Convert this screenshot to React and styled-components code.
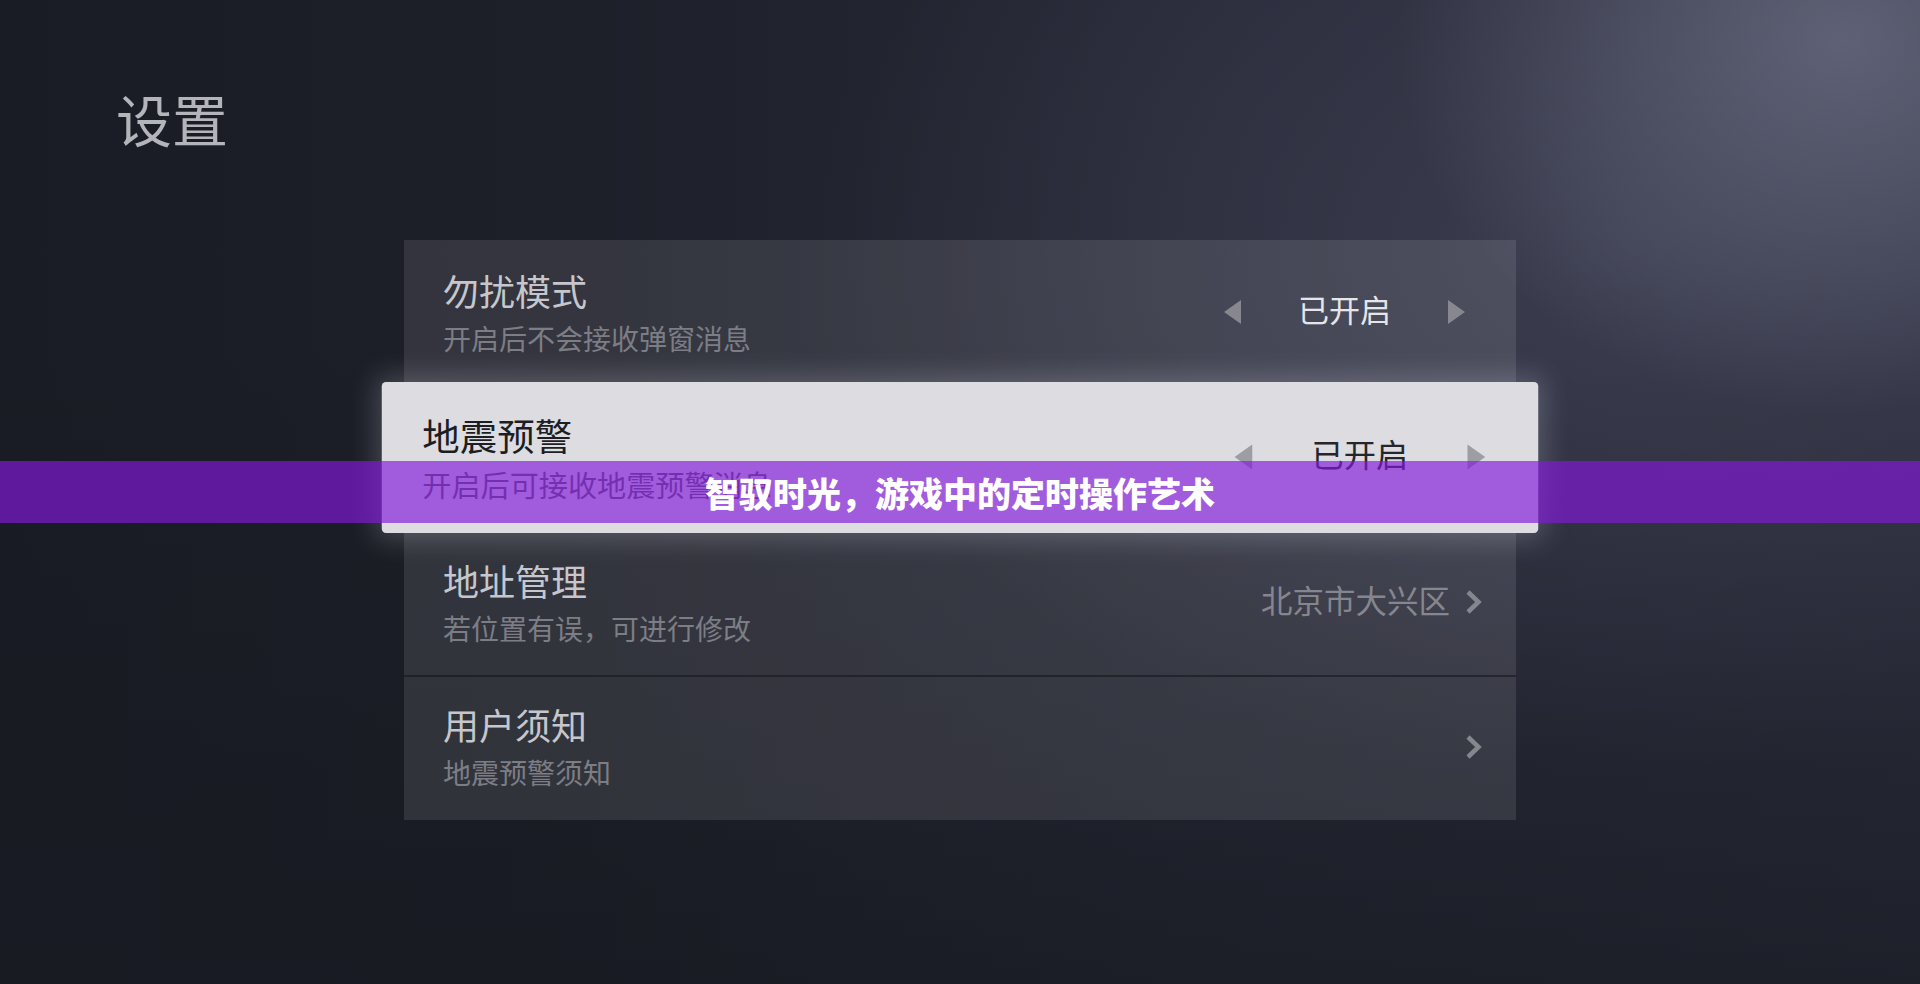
import React from "react";
import styled, { createGlobalStyle, css } from "styled-components";

const GlobalStyle = createGlobalStyle`
  html, body { margin: 0; padding: 0; }
  body {
    font-family: "Noto Sans CJK SC", "Noto Sans", sans-serif;
    background: #191b24;
  }
`;

const Page = styled.div`
  position: relative;
  height: 984px;
  overflow: hidden;
  background:
    radial-gradient(ellipse 620px 520px at 96% 4%, rgba(120, 122, 145, 0.62), rgba(120, 122, 145, 0) 72%),
    radial-gradient(ellipse 1100px 700px at 85% 25%, rgba(80, 82, 105, 0.45), rgba(80, 82, 105, 0) 75%),
    linear-gradient(to bottom, rgba(24, 26, 34, 0) 35%, rgba(24, 26, 34, 0.75) 100%),
    linear-gradient(90deg, #1a1c25 0%, #1d1f29 30%, #272937 62%, #2e3040 100%);
`;

const Title = styled.h1`
  margin: 0;
  padding: 90px 0 0 116px;
  font-size: 56px;
  line-height: 56px;
  font-weight: 400;
  color: #b4b5ba;
`;

const List = styled.div`
  width: 1112px;
  margin: 94px auto 0;
  display: flex;
  flex-direction: column;
`;

const Row = styled.div`
  position: relative;
  box-sizing: border-box;
  height: 145px;
  display: flex;
  align-items: center;
  justify-content: space-between;
  padding: 0 ${(p) => (p.$link ? 32 : 51)}px 0 39px;
  background: rgba(255, 255, 255, 0.1);
  ${(p) =>
    p.$divider &&
    css`
      border-top: 2px solid rgba(18, 19, 26, 0.55);
    `}
  ${(p) =>
    p.$active &&
    css`
      z-index: 2;
      background: #dcdce1;
      border-radius: 4px;
      transform: scale(1.04);
      box-shadow: 0 0 26px 6px rgba(220, 222, 235, 0.22);
    `}
`;

const TextBlock = styled.div`
  display: flex;
  flex-direction: column;
  gap: 16px;
  margin-bottom: ${(p) => (p.$divider ? 5 : 2)}px;
`;

const RowTitle = styled.div`
  font-size: 36px;
  line-height: 36px;
  color: ${(p) => (p.$active ? "#1d1e23" : "#c6c7cc")};
`;

const RowSub = styled.div`
  font-size: 28px;
  line-height: 28px;
  color: ${(p) => (p.$active ? "#5a5b62" : "#7c7d85")};
`;

const Cycler = styled.div`
  display: flex;
  align-items: center;
  gap: 57px;
  margin-bottom: 2px;
`;

const Arrow = styled.span`
  width: 0;
  height: 0;
  border-top: 12.5px solid transparent;
  border-bottom: 12.5px solid transparent;
  ${(p) =>
    p.$dir === "left"
      ? css`
          border-right: 17px solid ${p.$active ? "#9d9ea4" : "#86878f"};
        `
      : css`
          border-left: 17px solid ${p.$active ? "#9d9ea4" : "#86878f"};
        `}
`;

const Value = styled.span`
  font-size: 31px;
  line-height: 31px;
  margin-bottom: 6px;
  color: ${(p) => (p.$active ? "#25262b" : "#e6e6ea")};
`;

const LinkSide = styled.div`
  display: flex;
  align-items: center;
  gap: 13px;
  margin-bottom: ${(p) => (p.$divider ? 4 : 1)}px;
`;

const LinkValue = styled.span`
  font-size: 31.5px;
  line-height: 32px;
  margin-bottom: 6px;
  color: #85868e;
`;

const Banner = styled.div`
  position: absolute;
  left: 0;
  right: 0;
  top: 461px;
  height: 62px;
  z-index: 5;
  display: flex;
  align-items: center;
  justify-content: center;
  background: rgba(131, 25, 218, 0.66);
  color: #ffffff;
  font-size: 34px;
  font-weight: 900;
  letter-spacing: 0;
`;

const Chevron = () => (
  <svg width="21" height="26" viewBox="0 0 21 26">
    <polyline
      points="5,3 15.5,13 5,23"
      fill="none"
      stroke="#85868e"
      strokeWidth="4.5"
      strokeLinejoin="miter"
    />
  </svg>
);

const rows = [
  { title: "勿扰模式", sub: "开启后不会接收弹窗消息", type: "cycle", value: "已开启" },
  { title: "地震预警", sub: "开启后可接收地震预警消息", type: "cycle", value: "已开启", active: true },
  { title: "地址管理", sub: "若位置有误，可进行修改", type: "link", value: "北京市大兴区" },
  { title: "用户须知", sub: "地震预警须知", type: "link", value: "", divider: true },
];

export default function App() {
  return (
    <>
      <GlobalStyle />
      <Page>
        <Title>设置</Title>
        <List>
          {rows.map((r) => (
            <Row key={r.title} $active={r.active} $link={r.type === "link"} $divider={r.divider}>
              <TextBlock $divider={r.divider}>
                <RowTitle $active={r.active}>{r.title}</RowTitle>
                <RowSub $active={r.active}>{r.sub}</RowSub>
              </TextBlock>
              {r.type === "cycle" ? (
                <Cycler>
                  <Arrow $dir="left" $active={r.active} />
                  <Value $active={r.active}>{r.value}</Value>
                  <Arrow $dir="right" $active={r.active} />
                </Cycler>
              ) : (
                <LinkSide $divider={r.divider}>
                  {r.value && <LinkValue>{r.value}</LinkValue>}
                  <Chevron />
                </LinkSide>
              )}
            </Row>
          ))}
        </List>
        <Banner>智驭时光，游戏中的定时操作艺术</Banner>
      </Page>
    </>
  );
}
